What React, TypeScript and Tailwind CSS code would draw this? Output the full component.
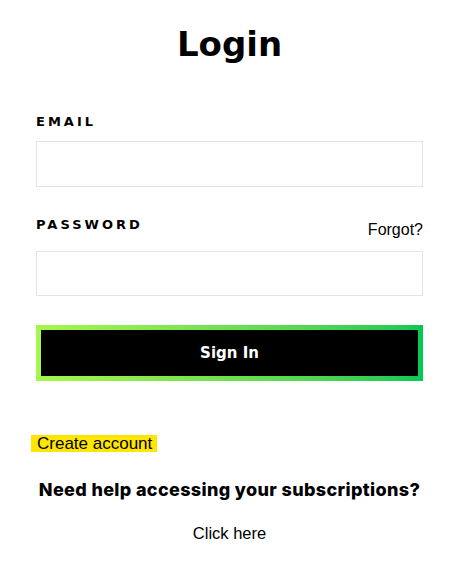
export default function App() {
  const mont = { fontFamily: '"DejaVu Sans", "Open Sans", sans-serif' };
  return (
    <div className="w-[462px] h-[570px] bg-white pl-[36px] pr-[39px] pt-[22px] font-['Liberation_Sans',Arial,sans-serif] text-black">
      <h1 className="text-center text-[34px] leading-[44px] font-bold" style={mont}>Login</h1>
      <div className="mt-[48px]">
        <label className="block text-[13px] leading-[16px] font-bold tracking-[3px]" style={mont}>EMAIL</label>
        <div className="mt-[11px] h-[46px] border border-[#e6e4df]" />
      </div>
      <div className="mt-[30px] flex items-end justify-between">
        <label className="block text-[13px] leading-[16px] font-bold tracking-[3px]" style={mont}>PASSWORD</label>
        <span className="text-[16px] leading-[18px] -mb-[6px]">Forgot?</span>
      </div>
      <div className="mt-[18px] h-[45px] border border-[#e6e4df]" />
      <div className="mt-[29px] h-[56px] p-[5px] bg-gradient-to-r from-[#a6f74b] to-[#00c853]">
        <div className="h-full bg-black flex items-center justify-center text-white text-[15px] font-bold" style={mont}>Sign In</div>
      </div>
      <div className="mt-[51px]">
        <span className="bg-[#ffe600] text-[17px] leading-[17px] pl-[6px] pr-[5px] -ml-[5px] inline-block">Create account</span>
      </div>
      <p className="mt-[23px] text-center text-[18px] tracking-[0.35px] font-extrabold leading-[22px] whitespace-nowrap font-['Inter',sans-serif]">Need help accessing your subscriptions?</p>
      <p className="mt-[22px] text-center text-[16.5px] leading-[20px]">Click here</p>
    </div>
  );
}
